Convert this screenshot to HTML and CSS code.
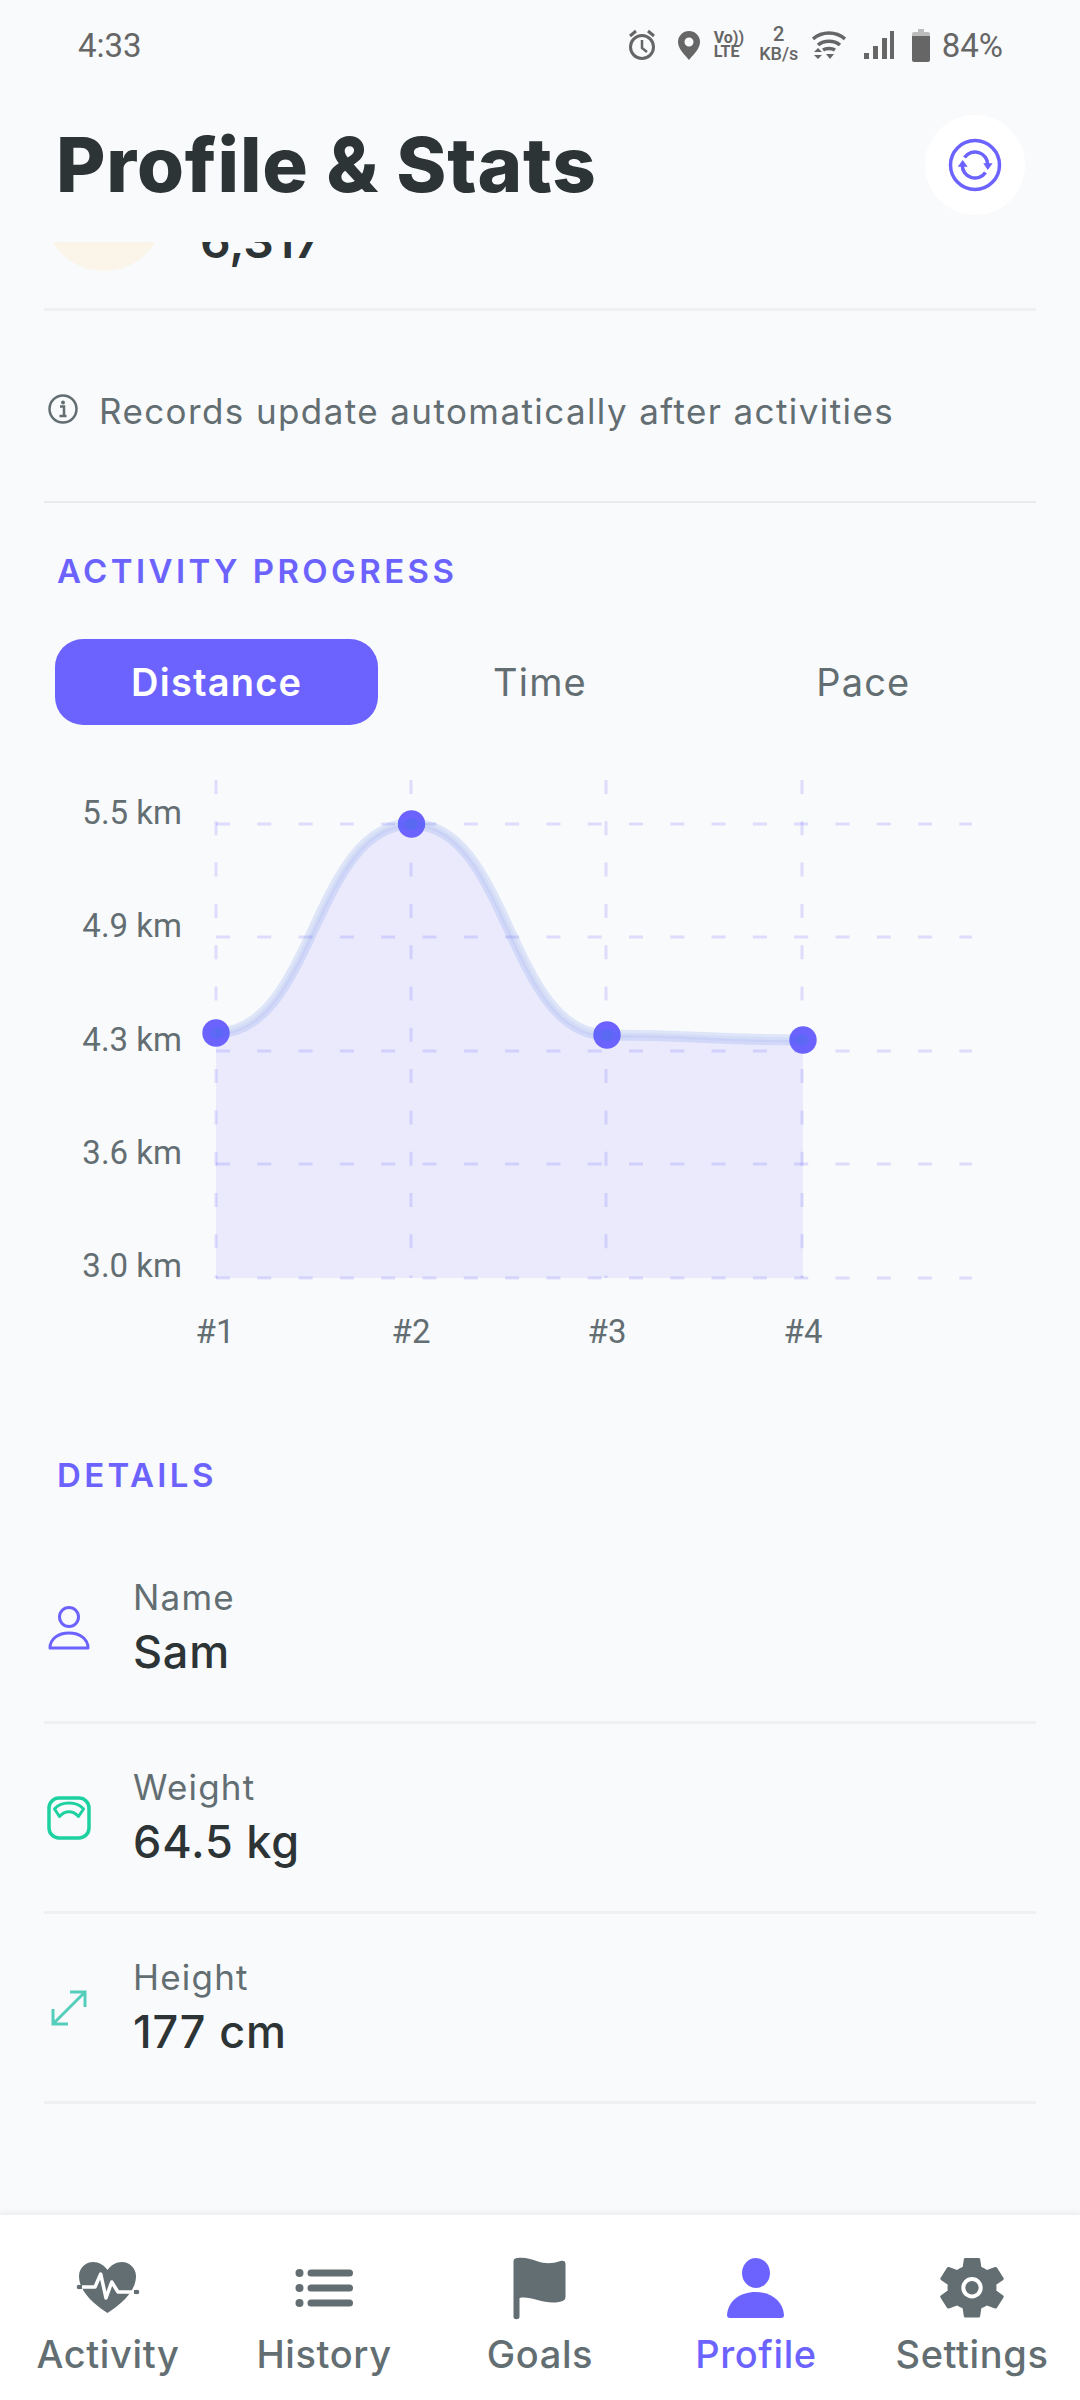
FILE: index.html
```html
<!DOCTYPE html>
<html lang="en">
<head>
<meta charset="utf-8">
<title>Profile &amp; Stats</title>
<link rel="stylesheet" href="styles.css">
</head>
<body>
<div class="app">
  <div class="status">
    <span class="clock">4:33</span>
    <div class="status-icons">
      <svg class="si si-alarm" width="28" height="36" viewBox="0 0 28 36"><g fill="none" stroke="#666" stroke-width="3"><circle cx="14" cy="20" r="11.500"/><path d="M14 13v8l5 4" stroke-width="2.500"/><path d="M2 9l6-5M26 9l-6-5"/></g></svg>
      <svg class="si si-pin" width="24" height="30" viewBox="0 0 24 30"><path fill="#666" fill-rule="evenodd" d="M12 1a11 11 0 0 1 11 11c0 7-7 13-11 18C8 25 1 19 1 12A11 11 0 0 1 12 1zm0 6.500a4.500 4.500 0 1 0 0 9 4.500 4.500 0 0 0 0-9z"/></svg>
      <div class="volte"><span>Vo))</span><span>LTE</span></div>
      <div class="speed"><span class="speed-num">2</span><span>KB/s</span></div>
      <svg class="si si-wifi" width="34" height="30" viewBox="0 0 34 30"><g fill="none" stroke="#666" stroke-width="3.500"><path d="M1 9c9-8 23-8 32 0"/><path d="M6 15c6-5 16-5 22 0"/><path d="M11 20c3-2 9-2 12 0"/></g><path fill="#666" d="M2 22l4-4 4 4zM2 25h8l-4 4zM14 24h8l-4 5z"/></svg>
      <svg class="si si-signal" width="32" height="30" viewBox="0 0 32 30"><path fill="#666" d="M1 23h5v6H1zM10 16h5v13h-5zM19 8h5v21h-5zM27 1h4v28h-4z"/></svg>
      <svg class="si si-batt" width="18" height="34" viewBox="0 0 18 34"><path fill="#bdbdbd" d="M6 1h6v3h4a2 2 0 0 1 2 2v6H0V6a2 2 0 0 1 2-2h4z"/><path fill="#666" d="M0 8h18v24a2 2 0 0 1-2 2H2a2 2 0 0 1-2-2z"/></svg>
      <span class="pct">84%</span>
    </div>
  </div>

  <header class="header">
    <h1 class="title">Profile &amp; Stats</h1>
    <button class="refresh" aria-label="Refresh">
      <svg width="54" height="54" viewBox="0 0 54 54"><g fill="none" stroke="#6C63FF" stroke-width="3.500"><circle cx="27" cy="27" r="24.500"/><path d="M16.500 19.500A12.700 12.700 0 0 1 39.700 27"/><path d="M37.500 34.500A12.700 12.700 0 0 1 14.300 27"/></g><path fill="#6C63FF" d="M35.300 25.300h9.400L39.700 32zM9.700 28.700h10L14.700 22z"/></svg>
    </button>
  </header>

  <main class="scroller">
    <div class="scroll-inner">
      <div class="record">
        <div class="record-badge"></div>
        <div class="record-value">6,317</div>
      </div>

      <div class="note">
        <svg width="30" height="30" viewBox="0 0 30 30"><circle cx="15" cy="15" r="13.500" fill="none" stroke="#636E72" stroke-width="2.500"/><circle cx="15" cy="8.500" r="2" fill="#636E72"/><path d="M12 12.500h4v9M11.500 22h7" fill="none" stroke="#636E72" stroke-width="2.500"/></svg>
        <span>Records update automatically after activities</span>
      </div>

      <section class="progress">
        <h2 class="section-title">ACTIVITY PROGRESS</h2>
        <div class="tabs">
          <div class="tab active">Distance</div>
          <div class="tab">Time</div>
          <div class="tab">Pace</div>
        </div>
        <svg class="chart" width="1080" height="600" viewBox="0 760 1080 600">
          <g class="grid">
            <path d="M216 824H972M216 937H972M216 1051H972M216 1164H972M216 1278H972"/>
            <path d="M216 780V1278M411 780V1278M606 780V1278M802 780V1278"/>
          </g>
          <path class="area" d="M216 1033C313.800 1033 313.800 824 411.500 824C509 824 509 1035 607 1035C705 1035 705 1040 803 1040V1278H216Z"/>
          <circle class="dot" cx="216" cy="1033" r="13.700"/>
          <circle class="dot" cx="411.500" cy="824" r="13.700"/>
          <circle class="dot" cx="607" cy="1035" r="13.700"/>
          <circle class="dot" cx="803" cy="1040" r="13.700"/>
          <path class="line" d="M216 1033C313.800 1033 313.800 824 411.500 824C509 824 509 1035 607 1035C705 1035 705 1040 803 1040"/>
          <path class="line-core" d="M216 1033C313.800 1033 313.800 824 411.500 824C509 824 509 1035 607 1035C705 1035 705 1040 803 1040"/>
          <circle class="dot-core" cx="216" cy="1033" r="6"/>
          <circle class="dot-core" cx="411.500" cy="824" r="6"/>
          <circle class="dot-core" cx="607" cy="1035" r="6"/>
          <circle class="dot-core" cx="803" cy="1040" r="6"/>
          <g class="ylab">
            <text x="182" y="824">5.5 km</text>
            <text x="182" y="937">4.9 km</text>
            <text x="182" y="1051">4.3 km</text>
            <text x="182" y="1164">3.6 km</text>
            <text x="182" y="1277">3.0 km</text>
          </g>
          <g class="xlab">
            <text x="215" y="1343">#1</text>
            <text x="411" y="1343">#2</text>
            <text x="607" y="1343">#3</text>
            <text x="803" y="1343">#4</text>
          </g>
        </svg>
      </section>

      <section class="details">
        <h2 class="section-title">DETAILS</h2>
        <div class="row">
          <svg class="row-icon" width="44" height="46" viewBox="0 0 44 46"><g fill="none" stroke="#6C63FF" stroke-width="3"><circle cx="22" cy="12" r="9.500"/><path d="M3 43c0-9 8-15 19-15s19 6 19 15z" stroke-linejoin="round"/></g></svg>
          <div class="row-text"><div class="row-label">Name</div><div class="row-value">Sam</div></div>
        </div>
        <div class="row">
          <svg class="row-icon" width="44" height="44" viewBox="0 0 44 44"><g fill="none" stroke="#1DD1A1" stroke-width="3.500"><rect x="2" y="2" width="40" height="40" rx="10"/><path d="M7.500 13C14 5 30 5 36.500 13L31.500 20.500C26 14 18 14 12.500 20.500Z" stroke-width="3" stroke-linejoin="round"/></g></svg>
          <div class="row-text"><div class="row-label">Weight</div><div class="row-value">64.5 kg</div></div>
        </div>
        <div class="row">
          <svg class="row-icon" width="44" height="44" viewBox="0 0 44 44"><g fill="none" stroke="#54CDBB" stroke-width="3"><path d="M7 37L37 7M23 6h15v15M6 23v15h15"/></g></svg>
          <div class="row-text"><div class="row-label">Height</div><div class="row-value">177 cm</div></div>
        </div>
      </section>
    </div>
  </main>

  <nav class="nav">
    <div class="nav-item">
      <svg width="62" height="62" viewBox="0 0 62 62"><path fill="#636E72" d="M30.500 55C20 48 2 35 2 18C2 10 9 4 16 4C22 4 27 7 30.500 12C34 7 39 4 45 4C52 4 59 10 59 18C59 35 41 48 30.500 55Z"/><path fill="none" stroke="#fff" stroke-width="3.500" stroke-linejoin="round" d="M4 29H18L23.700 16L29 40L34.700 24L41 34H58"/><circle cx="2" cy="29" r="2.300" fill="#636E72"/><circle cx="60" cy="34" r="2.300" fill="#636E72"/><rect x="2" y="27" width="3" height="4" fill="#636E72"/><rect x="57" y="32" width="3" height="4" fill="#636E72"/></svg>
      <span>Activity</span>
    </div>
    <div class="nav-item">
      <svg width="62" height="62" viewBox="0 0 62 62"><g fill="#636E72"><circle cx="6.500" cy="15" r="4"/><circle cx="6.500" cy="30" r="4"/><circle cx="6.500" cy="45" r="4"/><rect x="14.500" y="11.500" width="45.500" height="7" rx="3.500"/><rect x="14.500" y="26.500" width="45.500" height="7" rx="3.500"/><rect x="14.500" y="41.500" width="45.500" height="7" rx="3.500"/></g></svg>
      <span>History</span>
    </div>
    <div class="nav-item">
      <svg width="62" height="62" viewBox="0 0 62 62"><path fill="#636E72" d="M4.500 3c0-2 2-3 4-3c7-1 13 1 19 3c9 3 15 3 24 0c3-1 5 0 5 3v33c0 2-1 3-3 4c-9 3-17 1-25-1c-7-2-13-3-18-2v19c0 3-6 3-6 0z"/></svg>
      <span>Goals</span>
    </div>
    <div class="nav-item active">
      <svg width="62" height="62" viewBox="0 0 62 62"><g fill="#6C63FF"><ellipse cx="31" cy="15" rx="14" ry="15"/><path d="M5 60a3 3 0 0 1-3-3C3 43 15 34 30.500 34S58 43 59 57a3 3 0 0 1-3 3z"/></g></svg>
      <span>Profile</span>
    </div>
    <div class="nav-item">
      <svg width="62" height="62" viewBox="0 0 62 62"><path fill="#636E72" transform="translate(31 29.700) scale(3.400 3.100) translate(-12 -12)" d="M19.140 12.940c.04-.3.06-.61.06-.94 0-.32-.02-.64-.07-.94l2.030-1.580a.49.49 0 0 0 .12-.61l-1.920-3.320a.488.488 0 0 0-.59-.22l-2.390.96c-.5-.38-1.030-.7-1.620-.94l-.36-2.540a.484.484 0 0 0-.48-.41h-3.840c-.24 0-.43.17-.47.41l-.36 2.540c-.59.24-1.130.57-1.620.94l-2.390-.96c-.22-.08-.47 0-.59.22L2.740 8.870c-.12.21-.08.47.12.61l2.030 1.580c-.05.3-.09.63-.09.94s.02.64.07.94l-2.030 1.580a.49.49 0 0 0-.12.61l1.920 3.320c.12.22.37.29.59.22l2.390-.96c.5.38 1.030.7 1.620.94l.36 2.540c.05.24.24.41.48.41h3.840c.24 0 .44-.17.47-.41l.36-2.540c.59-.24 1.130-.56 1.620-.94l2.390.96c.22.08.47 0 .59-.22l1.920-3.320c.12-.22.07-.47-.12-.61l-2.010-1.580z"/><circle cx="31" cy="29.700" r="10.700" fill="#fff"/><circle cx="31" cy="29.700" r="6.700" fill="#636E72"/></svg>
      <span>Settings</span>
    </div>
  </nav>
</div>
</body>
</html>
```

FILE: styles.css
```css
* { box-sizing: border-box; }
html, body { margin: 0; padding: 0; }
body { background: #F9FAFC; font-family: "Inter", "Liberation Sans", sans-serif; color: #2D3436; }
.app { width: 1080px; height: 2400px; display: flex; flex-direction: column; overflow: hidden; }

.status { height: 90px; flex: none; display: flex; justify-content: space-between; align-items: center; padding: 0 77px 0 78px; font-family: "Roboto", sans-serif; color: #666; }
.clock { font-size: 33px; }
.status-icons { display: flex; align-items: center; }
.si { display: block; flex: none; }
.si-pin { margin-left: 21px; }
.volte { margin-left: 13px; width: 30px; display: flex; flex-direction: column; font-size: 16px; font-weight: 700; line-height: 14px; }
.speed { margin-left: 15px; width: 40px; margin-bottom: 2px; display: flex; flex-direction: column; align-items: center; font-size: 18px; font-weight: 500; line-height: 19px; }
.speed-num { font-size: 20px; }
.si-wifi { margin-left: 13px; }
.si-signal { margin-left: 17px; }
.si-batt { margin-left: 17px; }
.pct { font-size: 33px; margin-left: 12px; }

.header { height: 152px; flex: none; display: flex; justify-content: space-between; align-items: flex-start; padding: 25px 55px 0 56px; }
.title { margin: 2px 0 0; font-size: 76px; font-weight: 800; line-height: 94px; letter-spacing: 0.8px; color: #2D3436; }
.refresh { width: 100px; height: 100px; border: 0; border-radius: 50%; background: #fff; display: flex; align-items: center; justify-content: center; padding: 0; }

.scroller { flex: 1; min-height: 0; overflow: hidden; padding: 0 44px; }
.scroll-inner { margin-top: -100px; }

.record { height: 169px; display: flex; gap: 36px; align-items: flex-start; border-bottom: 3px solid #EEF0F2; }
.record-badge { width: 120px; height: 120px; border-radius: 50%; background: #FBF5E9; margin-top: 9px; flex: none; }
.record-value { font-size: 48px; font-weight: 600; line-height: 60px; margin-top: 69px; }

.note { height: 192px; display: flex; align-items: flex-start; gap: 21px; padding: 77px 0 0 4px; border-bottom: 2px solid #E9EBEE; color: #636E72; font-size: 35px; letter-spacing: 1.4px; line-height: 46px; }
.note svg { flex: none; margin-top: 6px; }

.section-title { margin: 0; padding-left: 13px; font-size: 33px; font-weight: 600; letter-spacing: 3.400px; line-height: 40px; color: #6C63FF; }
.progress { padding-top: 48px; }
.tabs { display: grid; grid-template-columns: repeat(3, 1fr); width: 970px; margin: 48px 0 0 11px; }
.tab { height: 86px; border-radius: 28px; display: flex; align-items: center; justify-content: center; font-size: 38px; letter-spacing: 1.2px; color: #636E72; }
.tab.active { background: #6C63FF; color: #fff; font-weight: 600; }
.chart { display: block; margin: 35px 0 0 -44px; }
.grid path { fill: none; stroke: rgba(108, 99, 255, 0.2); stroke-width: 3; stroke-dasharray: 14 27.300; }
.area { fill: rgba(108, 99, 255, 0.1); }
.dot { fill: #6C63FF; }
.dot-core { fill: rgba(65, 120, 225, 0.3); }
.line { fill: none; stroke: rgba(65, 105, 225, 0.14); stroke-width: 11; }
.line-core { fill: none; stroke: rgba(65, 105, 225, 0.06); stroke-width: 5; }
.ylab text { font-family: "Roboto", sans-serif; font-size: 33px; fill: #636E72; text-anchor: end; }
.xlab text { font-family: "Roboto", sans-serif; font-size: 33px; fill: #636E72; text-anchor: middle; }

.details { padding-top: 95px; }
.details .section-title { margin-bottom: 39px; }
.row { height: 190px; display: flex; align-items: center; gap: 42px; padding-left: 3px; border-bottom: 3px solid #EEF0F2; }
.row-icon { flex: none; }
.row-text { padding-top: 3px; }
.row-label { font-size: 35px; letter-spacing: 1.200px; line-height: 46px; color: #636E72; }
.row-value { font-size: 45px; letter-spacing: 0.8px; font-weight: 500; line-height: 64px; color: #2D3436; }

.nav { height: 187px; flex: none; background: #fff; border-top: 2px solid #EEF0F2; box-shadow: 0 -2px 4px rgba(0,0,0,0.04); display: grid; grid-template-columns: repeat(5, 1fr); padding-top: 43px; }
.nav-item { display: flex; flex-direction: column; align-items: center; gap: 4px; color: #636E72; font-size: 38px; letter-spacing: 0.6px; font-weight: 500; line-height: 60px; }
.nav-item svg { display: block; overflow: visible; }
.nav-item.active { color: #6C63FF; }
```
